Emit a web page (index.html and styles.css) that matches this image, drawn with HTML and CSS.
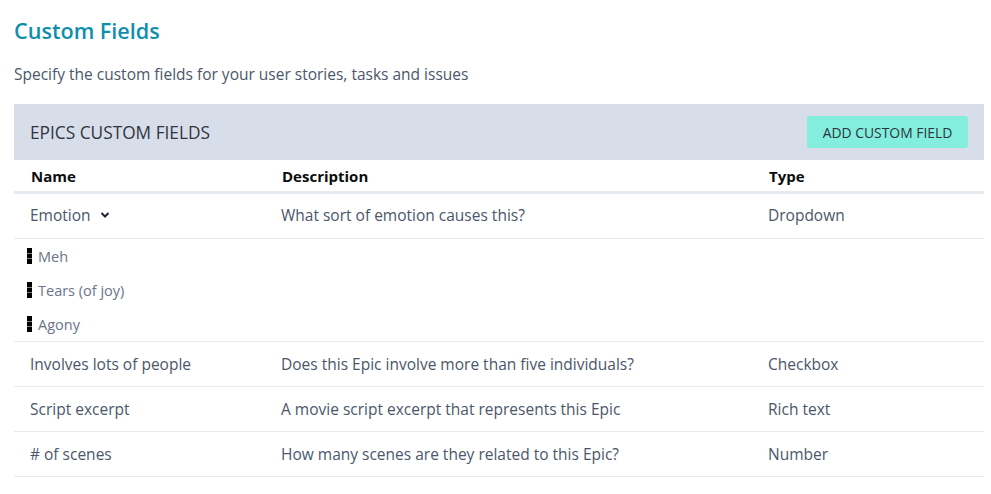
FILE: index.html
```html
<!DOCTYPE html>
<html>
<head>
<meta charset="utf-8">
<link rel="stylesheet" href="styles.css">
</head>
<body>
<div class="page">
  <h1 class="title">Custom Fields</h1>
  <p class="subtitle">Specify the custom fields for your user stories, tasks and issues</p>
  <section class="panel">
    <div class="panel-head">
      <h2 class="panel-title">EPICS CUSTOM FIELDS</h2>
      <button class="add-btn">ADD CUSTOM FIELD</button>
    </div>
    <div class="row head-row">
      <div class="c-name">Name</div>
      <div class="c-desc">Description</div>
      <div class="c-type">Type</div>
    </div>
    <div class="row first-row">
      <div class="c-name">Emotion <svg class="chev" width="10" height="8" viewBox="0 0 10 8"><path d="M1.5 2 L5 5.5 L8.5 2" fill="none" stroke="#1f2433" stroke-width="2"/></svg></div>
      <div class="c-desc">What sort of emotion causes this?</div>
      <div class="c-type">Dropdown</div>
    </div>
    <div class="options">
      <div class="option"><svg class="handle" width="5" height="16" viewBox="0 0 5 16"><rect x="0" y="0" width="5" height="5"/><rect x="0" y="5.5" width="5" height="5"/><rect x="0" y="11" width="5" height="5"/></svg>Meh</div>
      <div class="option"><svg class="handle" width="5" height="16" viewBox="0 0 5 16"><rect x="0" y="0" width="5" height="5"/><rect x="0" y="5.5" width="5" height="5"/><rect x="0" y="11" width="5" height="5"/></svg>Tears (of joy)</div>
      <div class="option"><svg class="handle" width="5" height="16" viewBox="0 0 5 16"><rect x="0" y="0" width="5" height="5"/><rect x="0" y="5.5" width="5" height="5"/><rect x="0" y="11" width="5" height="5"/></svg>Agony</div>
    </div>
    <div class="row">
      <div class="c-name">Involves lots of people</div>
      <div class="c-desc">Does this Epic involve more than five individuals?</div>
      <div class="c-type">Checkbox</div>
    </div>
    <div class="row">
      <div class="c-name">Script excerpt</div>
      <div class="c-desc">A movie script excerpt that represents this Epic</div>
      <div class="c-type">Rich text</div>
    </div>
    <div class="row">
      <div class="c-name"># of scenes</div>
      <div class="c-desc">How many scenes are they related to this Epic?</div>
      <div class="c-type">Number</div>
    </div>
  </section>
</div>
</body>
</html>
```
FILE: styles.css
```css
* { box-sizing: border-box; }
html, body { margin: 0; padding: 0; background: #fff; }
body {
  font-family: "Open Sans", "Noto Sans", sans-serif;
  color: #4c566a;
}
.page { padding: 14px 7px 0 14px; }
.title {
  margin: 0;
  padding-top: 4px;
  font-size: 21.6px;
  font-weight: 600;
  color: #0f8fac;
  line-height: 26px;
}
.subtitle {
  margin: 19px 0 0 0;
  font-size: 15.5px;
  line-height: 22px;
  color: #4c566a;
}
.panel { margin-top: 19px; }
.panel-head {
  display: flex;
  align-items: center;
  justify-content: space-between;
  background: #d8dee9;
  height: 56px;
  padding: 0 16px;
}
.panel-title {
  margin: 0;
  font-size: 17.3px;
  font-weight: 400;
  color: #2e3440;
}
.add-btn {
  border: none;
  background: #83eedd;
  border-radius: 3px;
  height: 32px;
  width: 161px;
  font-family: inherit;
  font-size: 13.9px;
  color: #2e3440;
  padding: 0;
}
.row {
  display: grid;
  grid-template-columns: 251px 487px 1fr;
  align-items: center;
  height: 45px;
  padding-left: 16px;
  border-bottom: 1px solid #e5e9f0;
  font-size: 15.5px;
}
.head-row {
  height: 34px;
  border-bottom: 3px solid #e5e9f0;
  font-weight: 700;
  color: #0d0d0d;
  padding-left: 17px;
  font-size: 15px;
}
.first-row { padding-bottom: 2px; }
.c-name { display: flex; align-items: center; }
.chev { margin-left: 9px; }
.options {
  padding: 0 0 0 13px;
  border-bottom: 1px solid #e5e9f0;
}
.option {
  display: flex;
  align-items: center;
  height: 34px;
  font-size: 14.5px;
  color: #6c7488;
}
.handle { margin-right: 6px; fill: #000; }
```
